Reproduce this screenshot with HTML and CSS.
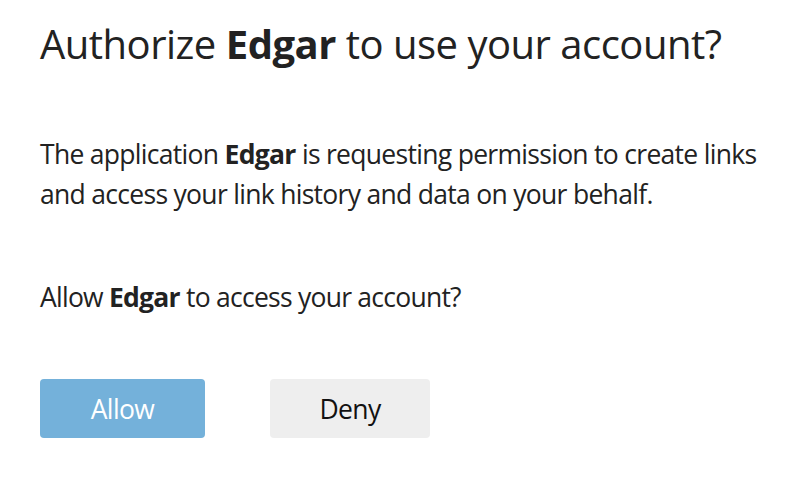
FILE: index.html
```html
<!DOCTYPE html>
<html>
<head>
<meta charset="utf-8">
<link rel="stylesheet" href="styles.css">
</head>
<body>
<main class="auth">
  <h1 class="auth-title">Authorize <strong>Edgar</strong> to use your account?</h1>
  <p class="auth-text">The application <strong>Edgar</strong> is requesting permission to create links and access your link history and data on your behalf.</p>
  <p class="auth-question">Allow <strong>Edgar</strong> to access your account?</p>
  <div class="auth-actions">
    <button class="btn btn-allow">Allow</button>
    <button class="btn btn-deny">Deny</button>
  </div>
</main>
</body>
</html>
```

FILE: styles.css
```css
html, body {
  margin: 0;
  padding: 0;
  background: #ffffff;
}
body {
  font-family: "Open Sans", "Noto Sans", sans-serif;
  color: #222222;
  width: 792px;
  height: 494px;
  overflow: hidden;
}
.auth {
  padding: 20px 40px 0 40px;
}
.auth-title {
  margin: 0;
  font-size: 40px;
  font-weight: 400;
  line-height: 48px;
  letter-spacing: -0.5px;
  white-space: nowrap;
}
.auth-title strong,
.auth-text strong,
.auth-question strong {
  font-weight: 700;
}
.auth-text {
  margin: 66px 0 0 0;
  font-size: 26.5px;
  line-height: 40px;
  letter-spacing: -0.7px;
  width: 735px;
}
.auth-question {
  margin: 63px 0 0 0;
  font-size: 26.5px;
  line-height: 40px;
  letter-spacing: -0.75px;
}
.auth-actions {
  display: flex;
  gap: 65px;
  margin-top: 62px;
}
.btn {
  font-family: inherit;
  font-size: 26.5px;
  letter-spacing: -0.6px;
  height: 59px;
  border: none;
  border-radius: 4px;
  padding: 0;
  cursor: pointer;
}
.btn-allow {
  width: 165px;
  background: #74b1da;
  color: #ffffff;
}
.btn-deny {
  width: 160px;
  background: #eeeeee;
  color: #111111;
}
```
